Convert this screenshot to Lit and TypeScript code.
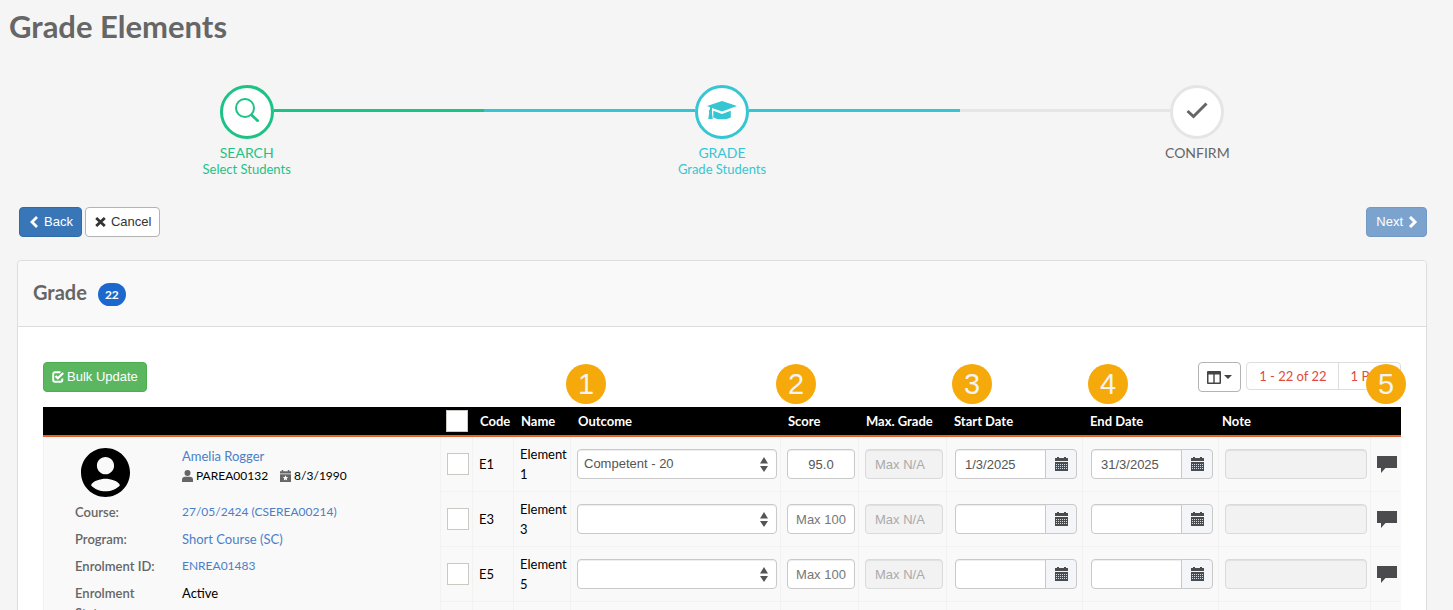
import { LitElement, html, svg, css, nothing } from "lit";
import { customElement } from "lit/decorators.js";
import { classMap } from "lit/directives/class-map.js";

interface Step {
  title: string;
  note: string;
  state: string;
  icon: unknown;
}

interface ElementRow {
  code: string;
  name: string;
  outcome: string;
  score: string;
  start: string;
  end: string;
}

const searchIcon = svg`<circle cx="10" cy="10" r="9" fill="none" stroke="currentColor" stroke-width="2"/><path d="M16 16.500l7.500 7" fill="none" stroke="currentColor" stroke-width="2.800"/>`;
const capIcon = svg`<path d="M0 5L15 0l15 5-15 5.600L5 7v5l.8 6H1.200L2.200 12 1.800 10 3 8V6.200zM6.300 9.800L15 13l8.800-3.200v6.600C19 19 11 19 6.300 16.400z"/>`;
const tickIcon = svg`<path d="M1.500 9l6 5.500L20.500 1.500" fill="none" stroke="currentColor" stroke-width="3"/>`;

const steps: Step[] = [
  { title: "SEARCH", note: "Select Students", state: "done", icon: html`<svg width="24" height="24" viewBox="0 0 24 24" fill="currentColor">${searchIcon}</svg>` },
  { title: "GRADE", note: "Grade Students", state: "active", icon: html`<svg width="30" height="19" viewBox="0 0 30 19" fill="currentColor">${capIcon}</svg>` },
  { title: "CONFIRM", note: "", state: "todo", icon: html`<svg width="22" height="17" viewBox="0 0 22 17" fill="currentColor">${tickIcon}</svg>` },
];

const rows: ElementRow[] = [
  { code: "E1", name: "Element 1", outcome: "Competent - 20", score: "95.0", start: "1/3/2025", end: "31/3/2025" },
  { code: "E3", name: "Element 3", outcome: "", score: "", start: "", end: "" },
  { code: "E5", name: "Element 5", outcome: "", score: "", start: "", end: "" },
];

const calendar = html`<svg width="13" height="14" viewBox="0 0 13 14" aria-hidden="true">
  <path fill="#4b4b4d" d="M0 1h2V0h2v1h5V0h2v1h2v3H0z"/>
  <path fill="#4b4b4d" d="M0 5h13v9H0z"/>
  <path stroke="#d5dbe2" stroke-width="1" stroke-dasharray="1 1" d="M1 7.500h11M1 9.500h11M1 11.500h11"/>
</svg>`;

@customElement("app-root")
export class AppRoot extends LitElement {
  static styles = css`
    :host {
      display: block;
      height: 100vh;
      overflow: hidden;
      background: #f5f5f5;
      color: #000;
      font: 13px/20px Lato, "Open Sans", sans-serif;
    }
    * { box-sizing: border-box; }
    h1, h2, dl, dd, dt, p { margin: 0; }
    a { color: #4a7fc8; text-decoration: none; }
    svg { display: block; flex: none; }
    button, input, select { font: 13px/18px "Liberation Sans", Arial, sans-serif; }

    h1 { padding: 6px 9px 0; color: #666; font-size: 31px; line-height: 41px; font-weight: 700; }

    .steps {
      display: grid;
      grid-template-columns: repeat(3, 1fr);
      margin: 0;
      padding: 38px 18px 0 9px;
      list-style: none;
    }
    .step { text-align: center; color: #666; }
    .track { display: flex; align-items: center; margin-bottom: 6px; }
    .line { flex: 1; height: 3px; margin-bottom: 3px; background: #e5e5e5; }
    .ring {
      display: flex;
      align-items: center;
      justify-content: center;
      width: 54px;
      height: 54px;
      padding-bottom: 4px;
      border: 3px solid #e5e5e5;
      border-radius: 50%;
      background: #fff;
    }
    .done { color: #1dc386; }
    .done .line { background: #1dc386; }
    .done .ring { border-color: #1dc386; }
    .active { color: #36c6d3; }
    .active .line { background: #36c6d3; }
    .active .ring { border-color: #36c6d3; }
    .step .hidden { background: none; }
    .step-title { font-size: 14px; line-height: 16px; }
    .step-note { font-size: 13px; line-height: 16px; min-height: 16px; }

    .btn {
      display: inline-flex;
      align-items: center;
      gap: 5px;
      height: 30px;
      padding: 0 8px 0 9px;
      border: 1px solid #b3b3b3;
      border-radius: 4px;
      background: #fff;
      color: #333;
    }
    .primary { border-color: #2e6da4; background: #3876b8; color: #fff; }
    .primary:disabled { border-color: #7099c4; background: #7ba3cd; color: #fff; }
    .success { gap: 3px; padding: 0 8px; border-color: #4cae4c; background: #5ab760; color: #fff; }
    .actions { display: flex; gap: 3px; padding: 30px 26px 0 19px; }
    .push { margin-left: auto; }

    .panel {
      margin: 23px 26px 0 17px;
      border: 1px solid #ddd;
      border-radius: 4px;
      background: #fff;
    }
    .panel-head {
      display: flex;
      align-items: center;
      gap: 11px;
      height: 66px;
      padding: 0 15px;
      border-bottom: 1px solid #ddd;
      border-radius: 4px 4px 0 0;
      background: #f9f9f9;
    }
    h2 { margin-bottom: 3px; color: #666; font-size: 20px; line-height: 24px; font-weight: 700; }
    .count {
      margin-top: 2px;
      padding: 0 7px;
      border-radius: 12px;
      background: #1d68cd;
      color: #fff;
      font-size: 12px;
      line-height: 23px;
      font-weight: 700;
    }
    .panel-body { padding: 35px 25px 0; }
    .toolbar { display: flex; align-items: flex-start; gap: 5px; height: 45px; }
    .pager { display: flex; border: 1px solid #ddd; border-radius: 4px; color: #de4b3c; }
    .pager span { padding: 3px 11px 3px 12px; }
    .pager span + span { border-left: 1px solid #ddd; }
    .columns { gap: 3px; padding: 0 8px; }

    table { width: 100%; table-layout: fixed; border-spacing: 0; }
    .c-check { width: 32px; }
    .c-code { width: 41px; }
    .c-name { width: 57px; }
    .c-outcome { width: 210px; }
    .c-score { width: 78px; }
    .c-max { width: 88px; }
    .c-date { width: 136px; }
    .c-note { width: 152px; }
    .c-talk { width: 31px; }
    th {
      position: relative;
      height: 30px;
      padding: 0 0 0 8px;
      border-bottom: 2px solid #e9602f;
      background: #000;
      color: #fff;
      text-align: left;
      font-weight: 700;
      white-space: nowrap;
    }
    td {
      height: 55px;
      padding: 0 3px 0 6px;
      border-bottom: 1px solid #f2f2f2;
      border-left: 1px solid #f2f2f2;
      background: #f9f9f9;
      vertical-align: middle;
    }
    th.pick { padding-left: 6px; }
    th.note { padding-left: 4px; }
    td.date { padding: 0 5px 0 8px; }
    td.info { padding: 9px 10px 10px 31px; vertical-align: top; }

    .pin {
      position: absolute;
      z-index: 1;
      top: -43px;
      left: -4px;
      width: 40px;
      border-radius: 50%;
      background: #f5a90b;
      color: #f3f3f3;
      font: 29px/40px "Liberation Sans", sans-serif;
      text-align: center;
    }
    .pin.inset { left: 6px; }

    .tick {
      appearance: none;
      display: block;
      width: 22px;
      height: 22px;
      margin: 0;
      border: 1px solid #ccc8c4;
      background: #fff;
    }
    .field {
      display: block;
      width: 100%;
      height: 30px;
      padding: 0 9px;
      border: 1px solid #c9c9c9;
      border-radius: 4px;
      background: #fff;
      color: #555;
      box-shadow: inset 0 1px 1px rgba(0, 0, 0, 0.075);
    }
    .field::placeholder { color: #777; }
    .field:disabled { border-color: #dadada; background: #f2f2f2; }
    .field:disabled::placeholder { color: #aaa; }
    .score { padding: 0 4px; text-align: center; }
    .picker { display: grid; align-items: center; }
    .picker > * { grid-area: 1 / 1; }
    .picker select { appearance: none; padding: 0 6px; }
    .picker svg { justify-self: end; margin-right: 9px; pointer-events: none; }
    .group { display: flex; }
    .group .field { flex: 1; min-width: 0; border-radius: 4px 0 0 4px; }
    .group button {
      display: flex;
      align-items: center;
      justify-content: center;
      width: 32px;
      height: 30px;
      margin-left: -1px;
      padding: 0;
      border: 1px solid #c9c9c9;
      border-radius: 0 4px 4px 0;
      background: #f3f5f8;
    }
    .talk { display: block; padding: 0; border: 0; background: none; }

    .person { display: grid; grid-template-columns: 107px 1fr; }
    .avatar { margin: 2px 0 0 6px; }
    .facts { display: flex; align-items: center; gap: 3px; }
    .facts, .ref { font-size: 12px; }
    .facts .born { margin-left: 9px; }
    dl { display: grid; grid-template-columns: 107px 1fr; row-gap: 7px; margin-top: 5px; }
    dt { width: 86px; color: #666; font-weight: 600; }
  `;

  private date(label: string, value: string) {
    return html`<td class="date">
      <div class="group">
        <input class="field" aria-label=${label} .value=${value}>
        <button aria-label="Pick ${label}">${calendar}</button>
      </div>
    </td>`;
  }

  private info() {
    return html`<td class="info" rowspan="4">
      <div class="person">
        <svg class="avatar" width="49" height="49" viewBox="2 2 20 20" aria-hidden="true">
          <path d="M12 2C6.480 2 2 6.480 2 12s4.480 10 10 10 10-4.480 10-10S17.520 2 12 2zm0 3.700c1.940 0 3.500 1.560 3.500 3.500s-1.560 3.500-3.500 3.500-3.500-1.560-3.500-3.500 1.560-3.500 3.500-3.500zm0 14c-2.300 0-4.500-.9-5.900-2.500.5-1.800 3.900-2.700 5.900-2.700s5.400.9 5.900 2.700c-1.400 1.600-3.600 2.500-5.900 2.500z"/>
        </svg>
        <div>
          <a href="#amelia">Amelia Rogger</a>
          <div class="facts">
            <svg width="11" height="12" viewBox="0 0 11 12" fill="#666"><circle cx="5.500" cy="3" r="3"/><path d="M0 12V9.500C0 7.500 1.500 6.700 3 6.700h5c1.500 0 3 .8 3 2.800V12z"/></svg>
            <span>PAREA00132</span>
            <svg class="born" width="11" height="12" viewBox="0 0 11 12" fill="#666"><path fill-rule="evenodd" d="M0 1.300h1.700V0h1.500v1.300h4.600V0h1.500v1.300H11V3.500H0zM0 4.300h11V12H0zM5.500 5.300l.8 1.700 1.900.2-1.400 1.300.4 1.900-1.700-.9-1.700.9.4-1.900-1.400-1.300 1.900-.2z"/></svg>
            <span>8/3/1990</span>
          </div>
        </div>
      </div>
      <dl>
        <dt>Course:</dt><dd class="ref"><a href="#course">27/05/2424 (CSEREA00214)</a></dd>
        <dt>Program:</dt><dd><a href="#program">Short Course (SC)</a></dd>
        <dt>Enrolment ID:</dt><dd class="ref"><a href="#enrolment">ENREA01483</a></dd>
        <dt>Enrolment Status:</dt><dd>Active</dd>
      </dl>
    </td>`;
  }

  private row(r: ElementRow, i: number) {
    return html`<tr>
      ${i === 0 ? this.info() : nothing}
      <td><input class="tick" type="checkbox" aria-label="Select ${r.code}"></td>
      <td>${r.code}</td>
      <td>${r.name}</td>
      <td>
        <div class="picker">
          <select class="field" aria-label="Outcome ${r.code}"><option>${r.outcome}</option></select>
          <svg width="8" height="15" viewBox="0 0 8 15" fill="#555"><path d="M4 0l4 6.500H0zM4 15l4-6H0z"/></svg>
        </div>
      </td>
      <td><input class="field score" aria-label="Score ${r.code}" placeholder="Max 100" .value=${r.score}></td>
      <td><input class="field" aria-label="Max grade ${r.code}" placeholder="Max N/A" disabled></td>
      ${this.date(`start date ${r.code}`, r.start)}
      ${this.date(`end date ${r.code}`, r.end)}
      <td><input class="field" aria-label="Note ${r.code}" disabled></td>
      <td>
        <button class="talk" aria-label="Comment ${r.code}">
          <svg width="20" height="17" viewBox="0 0 20 17" fill="#4b4b4d"><path d="M0 0h20v12H8.500L4 17v-5H0z"/></svg>
        </button>
      </td>
    </tr>`;
  }

  render() {
    return html`
      <h1>Grade Elements</h1>
      <ol class="steps">
        ${steps.map((s, i) => html`<li class=${classMap({ step: true, [s.state]: true })}>
          <div class="track">
            <span class=${classMap({ line: true, hidden: i === 0 })}></span>
            <span class="ring">${s.icon}</span>
            <span class=${classMap({ line: true, hidden: i === steps.length - 1 })}></span>
          </div>
          <div class="step-title">${s.title}</div>
          <div class="step-note">${s.note}</div>
        </li>`)}
      </ol>
      <div class="actions">
        <button class="btn primary"><svg width="10" height="12" viewBox="0 0 10 12"><path d="M8 1L3 6l5 5" fill="none" stroke="currentColor" stroke-width="2.800"/></svg>Back</button>
        <button class="btn"><svg width="11" height="10" viewBox="0 0 11 10"><path d="M1.200 1l8.600 8M9.800 1L1.200 9" fill="none" stroke="currentColor" stroke-width="2.800"/></svg>Cancel</button>
        <button class="btn primary push" disabled>Next<svg width="10" height="12" viewBox="0 0 10 12"><path d="M2 1l5 5-5 5" fill="none" stroke="currentColor" stroke-width="3"/></svg></button>
      </div>
      <section class="panel">
        <header class="panel-head"><h2>Grade</h2><span class="count">22</span></header>
        <div class="panel-body">
          <div class="toolbar">
            <button class="btn success"><svg width="12" height="12" viewBox="0 0 12 12"><path d="M8.500 1.200H3A1.800 1.800 0 0 0 1.200 3v6A1.800 1.800 0 0 0 3 10.800h5.500A1.800 1.800 0 0 0 10.300 9V7.500" fill="none" stroke="currentColor" stroke-width="1.900"/><path d="M3.500 5l2.300 2.300L11.300 2" fill="none" stroke="currentColor" stroke-width="2.200"/></svg>Bulk Update</button>
            <button class="btn columns push" aria-label="Columns">
              <svg width="14" height="13" viewBox="0 0 14 13"><path fill-rule="evenodd" fill="#444" d="M1 0h12a1 1 0 0 1 1 1v11a1 1 0 0 1-1 1H1a1 1 0 0 1-1-1V1a1 1 0 0 1 1-1zM1.500 3.500v8h4.800v-8zM7.700 3.500v8h4.800v-8z"/></svg>
              <svg width="8" height="4" viewBox="0 0 8 4"><path d="M0 0h8L4 4z" fill="#444"/></svg>
            </button>
            <div class="pager"><span>1 - 22 of 22</span><span>1 Page</span></div>
          </div>
          <table>
            <colgroup>
              <col><col class="c-check"><col class="c-code"><col class="c-name"><col class="c-outcome"><col class="c-score">
              <col class="c-max"><col class="c-date"><col class="c-date"><col class="c-note"><col class="c-talk">
            </colgroup>
            <thead>
              <tr>
                <th></th>
                <th class="pick"><input class="tick" type="checkbox" aria-label="Select all"></th>
                <th>Code</th>
                <th>Name</th>
                <th>Outcome<span class="pin">1</span></th>
                <th>Score<span class="pin">2</span></th>
                <th>Max. Grade</th>
                <th>Start Date<span class="pin inset">3</span></th>
                <th>End Date<span class="pin inset">4</span></th>
                <th class="note">Note</th>
                <th><span class="pin">5</span></th>
              </tr>
            </thead>
            <tbody>
              ${rows.map((r, i) => this.row(r, i))}
              <tr>${Array.from({ length: 10 }, () => html`<td></td>`)}</tr>
            </tbody>
          </table>
        </div>
      </section>
    `;
  }
}
